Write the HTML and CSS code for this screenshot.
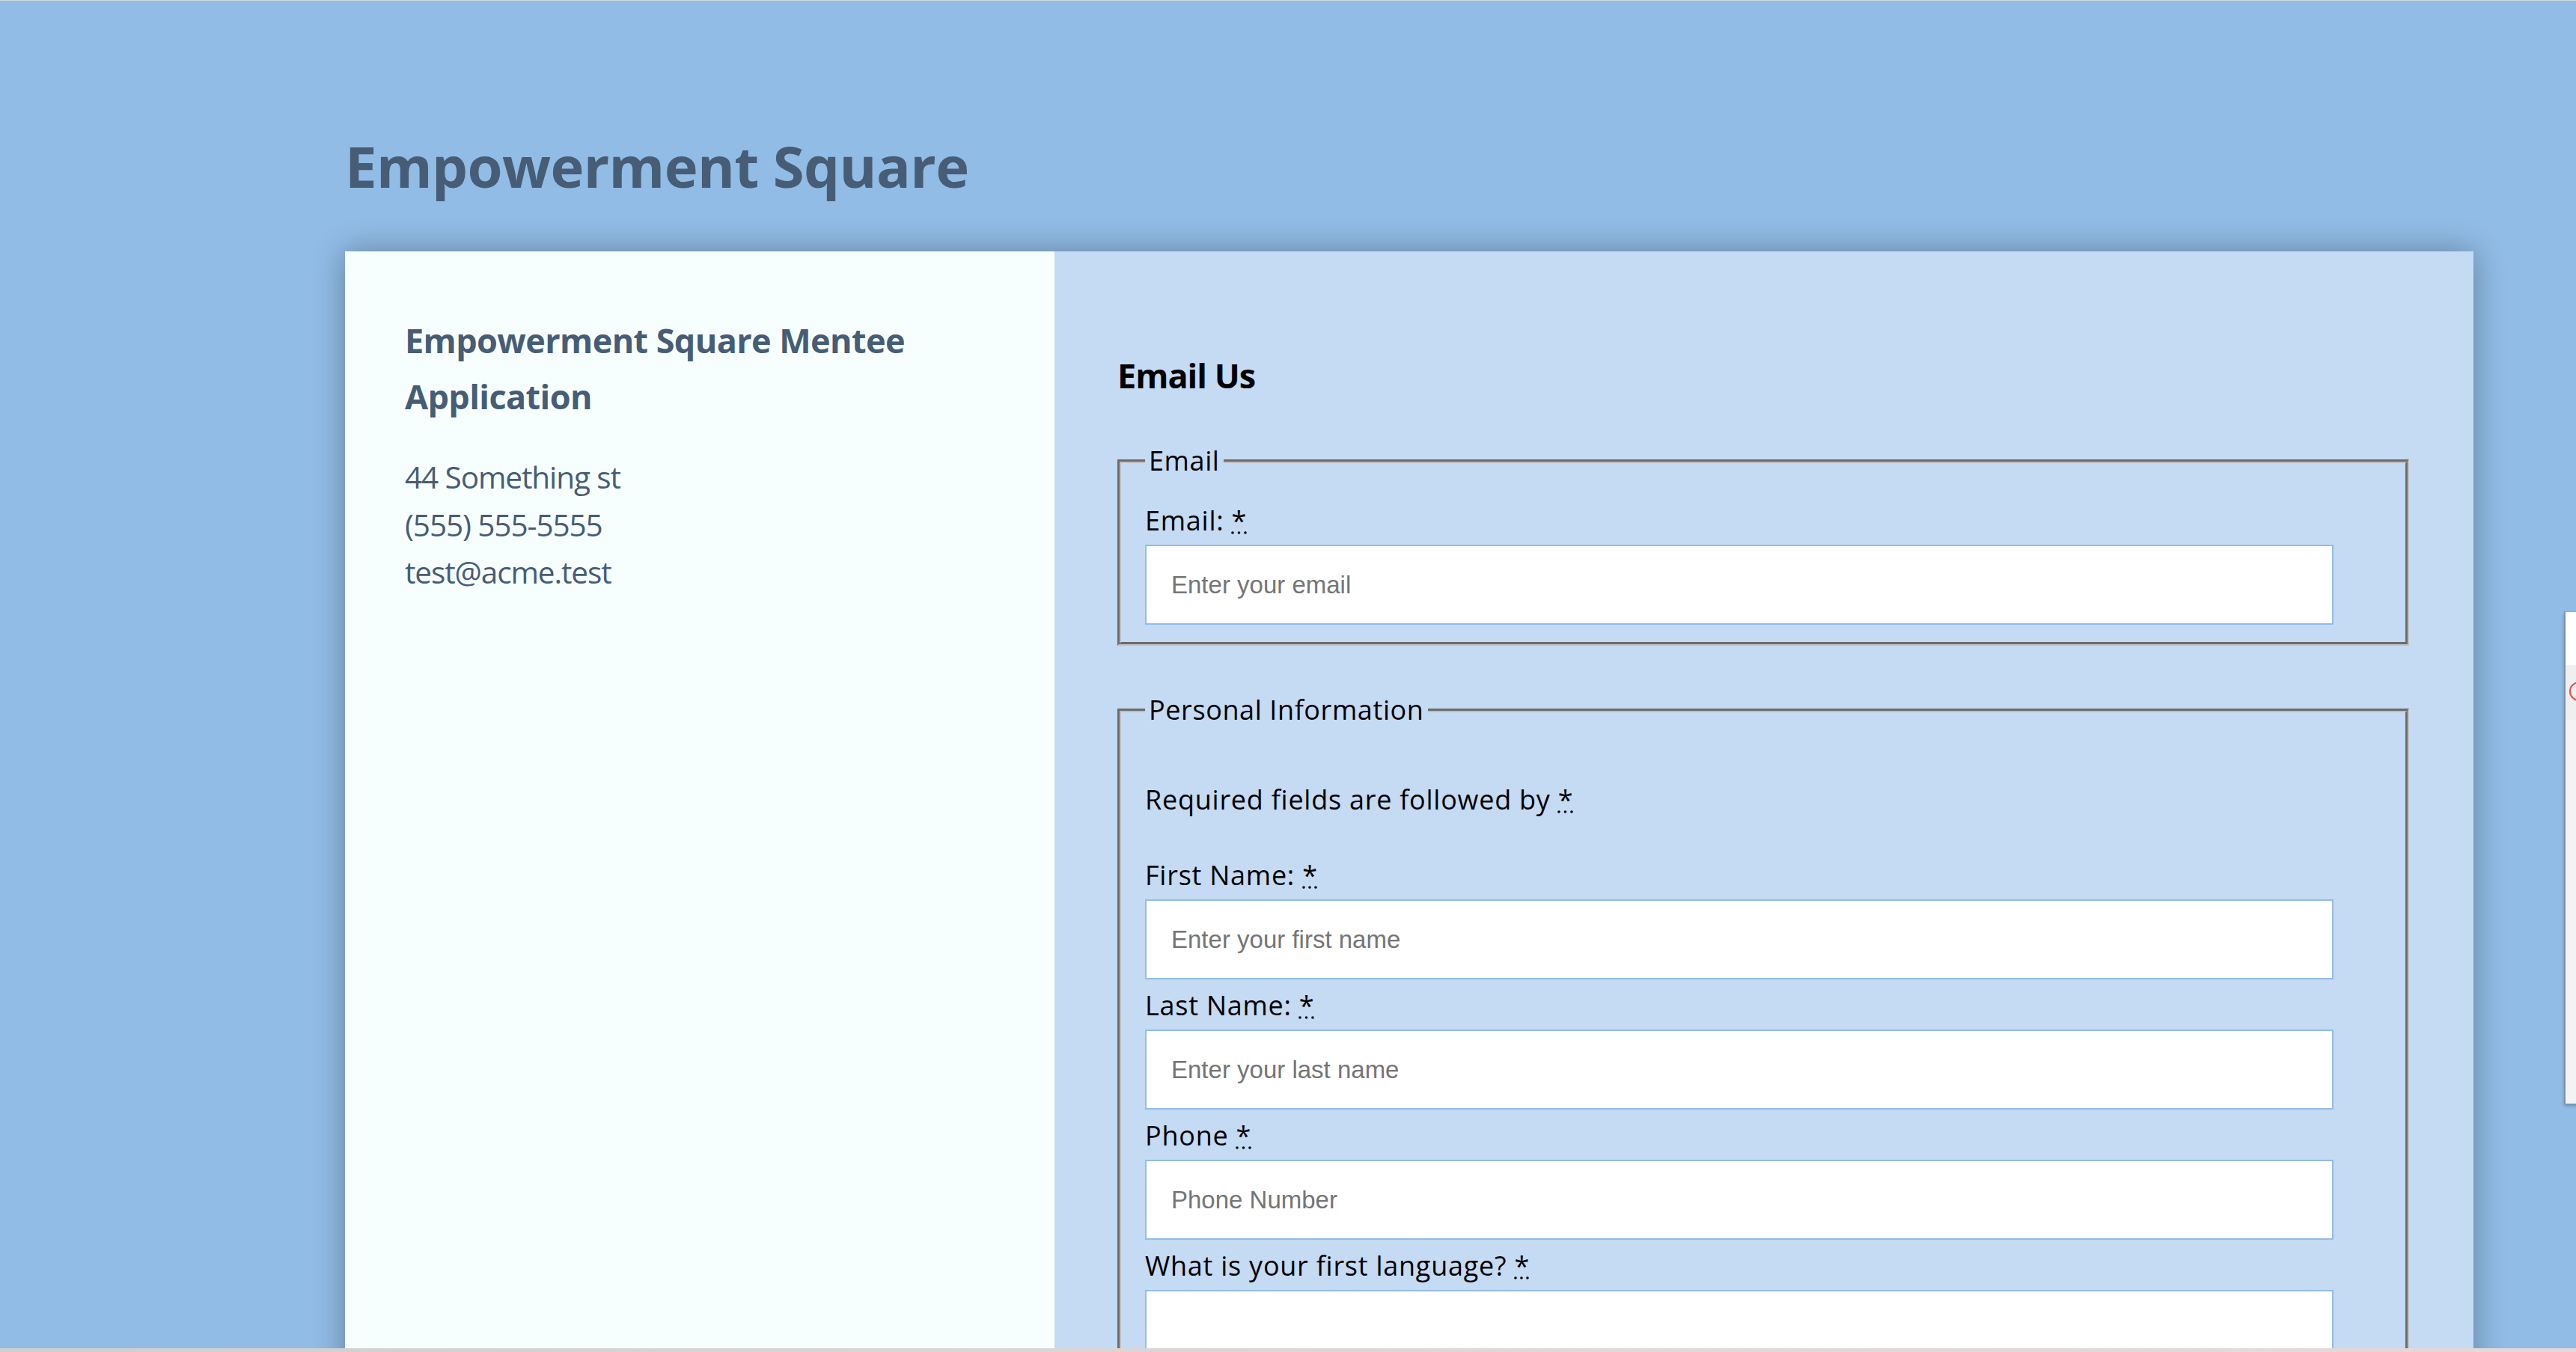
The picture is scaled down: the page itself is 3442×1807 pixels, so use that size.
FILE: index.html
```html
<!DOCTYPE html>
<html lang="en">
<head>
<meta charset="utf-8">
<title>Empowerment Square</title>
<link rel="stylesheet" href="styles.css">
</head>
<body>
<header class="site-header">
  <h1 class="site-title">Empowerment Square</h1>
</header>
<main class="card">
  <aside class="info">
    <h3 class="info-title">Empowerment Square Mentee Application</h3>
    <div class="contact">
      <div>44 Something st</div>
      <div>(555) 555-5555</div>
      <div>test@acme.test</div>
    </div>
  </aside>
  <section class="form-panel">
    <h2 class="form-title">Email Us</h2>
    <form class="form">
      <fieldset class="fs fs-email">
        <legend>Email</legend>
        <div class="group">
          <label for="email">Email: <abbr title="required">*</abbr></label>
          <input id="email" type="email" placeholder="Enter your email">
        </div>
      </fieldset>
      <fieldset class="fs fs-personal">
        <legend>Personal Information</legend>
        <p class="note">Required fields are followed by <abbr title="required">*</abbr></p>
        <div class="group">
          <label for="first">First Name: <abbr title="required">*</abbr></label>
          <input id="first" type="text" placeholder="Enter your first name">
        </div>
        <div class="group">
          <label for="last">Last Name: <abbr title="required">*</abbr></label>
          <input id="last" type="text" placeholder="Enter your last name">
        </div>
        <div class="group">
          <label for="phone">Phone <abbr title="required">*</abbr></label>
          <input id="phone" type="tel" placeholder="Phone Number">
        </div>
        <div class="group">
          <label for="lang">What is your first language? <abbr title="required">*</abbr></label>
          <input id="lang" type="text">
        </div>
        <div class="group">
          <label for="city">City <abbr title="required">*</abbr></label>
          <input id="city" type="text" placeholder="Enter your city">
        </div>
      </fieldset>
    </form>
  </section>
</main>
<div class="side-widget">
  <div class="side-widget-top"></div>
  <div class="side-widget-band">
    <svg class="side-widget-icon" width="16" height="40" viewBox="0 0 16 40"><circle cx="18" cy="20" r="12" fill="none" stroke="#e8474a" stroke-width="2"/></svg>
  </div>
  <div class="side-widget-body"></div>
</div>
<div class="bottom-strip"></div>
</body>
</html>
```
FILE: styles.css
```css
html, body {
  margin: 0;
  padding: 0;
}

body {
  background: #91bce6;
  border-top: 1px solid #d2d8df;
  font-family: "Open Sans", "Liberation Sans", sans-serif;
  overflow: hidden;
}

.site-header {
  padding: 171px 137px 0 461px;
}

.site-title {
  margin: 0;
  font-size: 76px;
  font-weight: 700;
  letter-spacing: -0.6px;
  line-height: 100px;
  color: #475d75;
}

.card {
  margin: 64px 137px 0 461px;
  display: grid;
  grid-template-columns: 948px 1fr;
  box-shadow: 0 0 40px rgba(0, 0, 0, 0.32);
  min-height: 1700px;
}

.info {
  background: #f7fffe;
  padding: 81px 80px 0;
  color: #475d75;
}

.info-title {
  margin: 0;
  font-size: 45px;
  font-weight: 700;
  letter-spacing: -0.6px;
  line-height: 75px;
}

.contact {
  margin-top: 39px;
  font-size: 40.5px;
  letter-spacing: -1.1px;
  line-height: 63.5px;
}

.form-panel {
  background: #c5daf3;
  padding: 135.5px 86px 80px 84px;
}

.form-title {
  margin: 0 0 60.5px;
  font-size: 45px;
  line-height: 60px;
  font-weight: 700;
  letter-spacing: -1px;
  color: #000;
}

.fs {
  margin: 0;
  border: 5px groove #c0c0c0;
  padding: 12px 32px 23px;
  min-width: 0;
}

.fs legend {
  padding: 0 5px;
  font-size: 36px;
  letter-spacing: 0.6px;
  line-height: 48px;
  color: #000;
}

.fs-email {
  padding-top: 21px;
}

.fs-personal {
  margin-top: 62px;
}

.note {
  margin: 52px 0 37px;
  font-size: 36px;
  letter-spacing: 0.75px;
  line-height: 64px;
  color: #000;
}

.group {
  margin-top: 3px;
}

.group label {
  display: block;
  font-size: 36px;
  letter-spacing: 0.75px;
  line-height: 64px;
  color: #000;
}

.group input {
  display: block;
  box-sizing: border-box;
  width: 1588px;
  height: 107px;
  margin: 0;
  border: 2px solid #92bde8;
  padding: 0 33px;
  background: #fff;
  font-family: "Liberation Sans", Arial, sans-serif;
  font-size: 33px;
  color: #000;
  outline: none;
}

.group input::placeholder {
  color: #757575;
}

abbr[title] {
  text-decoration: underline dotted;
}

.side-widget {
  position: fixed;
  left: 3426px;
  top: 817px;
  width: 16px;
  height: 657px;
  border-left: 2px solid #7e91aa;
  border-top: 1px solid #9aa9bd;
  display: flex;
  flex-direction: column;
  box-shadow: 0 3px 4px rgba(0, 0, 0, 0.25);
}

.side-widget-top {
  height: 71px;
  background: #ffffff;
}

.side-widget-band {
  height: 73px;
  background: #efefef;
  overflow: hidden;
}

.side-widget-icon {
  display: block;
  margin-top: 15px;
}

.side-widget-body {
  flex: 1;
  background: #f3f3f3;
}

.bottom-strip {
  position: fixed;
  left: 0;
  right: 0;
  bottom: 0;
  height: 5px;
  background: linear-gradient(90deg, #cfcfcf 0%, #d6d4d4 30%, #e3d6d6 60%, #e6d8d8 100%);
}
```
